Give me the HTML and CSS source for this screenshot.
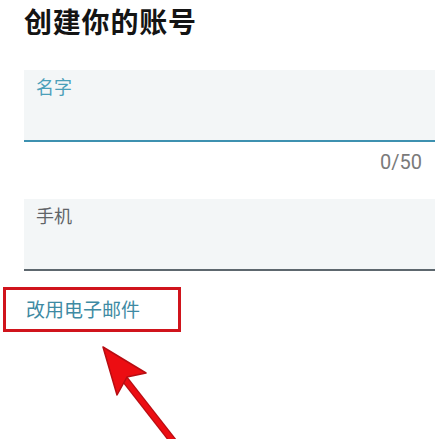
FILE: index.html
```html
<!DOCTYPE html>
<html lang="zh">
<head>
<meta charset="utf-8">
<link rel="stylesheet" href="styles.css">
</head>
<body>
<div class="page">
  <h1 class="title">创建你的账号</h1>
  <div class="field field-active">
    <span class="field-label label-active">名字</span>
  </div>
  <div class="counter">0/50</div>
  <div class="field field-idle">
    <span class="field-label label-idle">手机</span>
  </div>
  <div class="link-row">
    <span class="highlight-box">
      <a class="switch-link">改用电子邮件</a>
    </span>
  </div>
</div>
<svg class="arrow" width="442" height="439" viewBox="0 0 442 439">
  <line x1="123" y1="377" x2="180" y2="450" stroke="#b80d12" stroke-width="7.5" stroke-linecap="butt"/>
  <line x1="123" y1="377" x2="180" y2="450" stroke="#ec0d12" stroke-width="5"/>
  <path d="M103 347 L146 373 L127 377 L117 395 Z" fill="#ec0d12" stroke="#b80d12" stroke-width="1.5" stroke-linejoin="round"/>
</svg>
</body>
</html>
```
FILE: styles.css
```css
html, body {
  margin: 0;
  padding: 0;
  background: #ffffff;
}
body {
  position: relative;
  width: 442px;
  height: 439px;
  overflow: hidden;
  font-family: "Noto Sans CJK SC", "Noto Sans", Roboto, sans-serif;
}
.page {
  padding: 0 7px 0 24px;
}
.title {
  margin: 0;
  padding-top: 1px;
  font-size: 28px;
  line-height: 40px;
  font-weight: 700;
  color: #141414;
  letter-spacing: 0.8px;
}
.field {
  box-sizing: border-box;
  height: 72px;
  background: #f3f6f7;
  padding: 2px 0 0 12px;
}
.field-active {
  margin-top: 29px;
  border-bottom: 2px solid #3d91b0;
}
.field-idle {
  margin-top: 25px;
  border-bottom: 2px solid #5d676e;
}
.field-label {
  font-size: 18px;
  line-height: 28px;
}
.label-active {
  color: #4b9fb9;
}
.label-idle {
  color: #5f6467;
}
.counter {
  text-align: right;
  padding-right: 13px;
  margin-top: 8px;
  font-family: Roboto, "Noto Sans", sans-serif;
  font-size: 20px;
  line-height: 24px;
  color: #7a7a7a;
}
.link-row {
  margin-top: 16px;
  margin-left: -21px;
}
.highlight-box {
  display: inline-block;
  box-sizing: border-box;
  width: 178px;
  height: 45px;
  border: 3px solid #d0141c;
  padding: 4px 0 0 20px;
}
.switch-link {
  font-size: 19px;
  line-height: 30px;
  color: #3e8aa3;
  text-decoration: none;
}
.arrow {
  position: absolute;
  left: 0;
  top: 0;
  pointer-events: none;
}
```
